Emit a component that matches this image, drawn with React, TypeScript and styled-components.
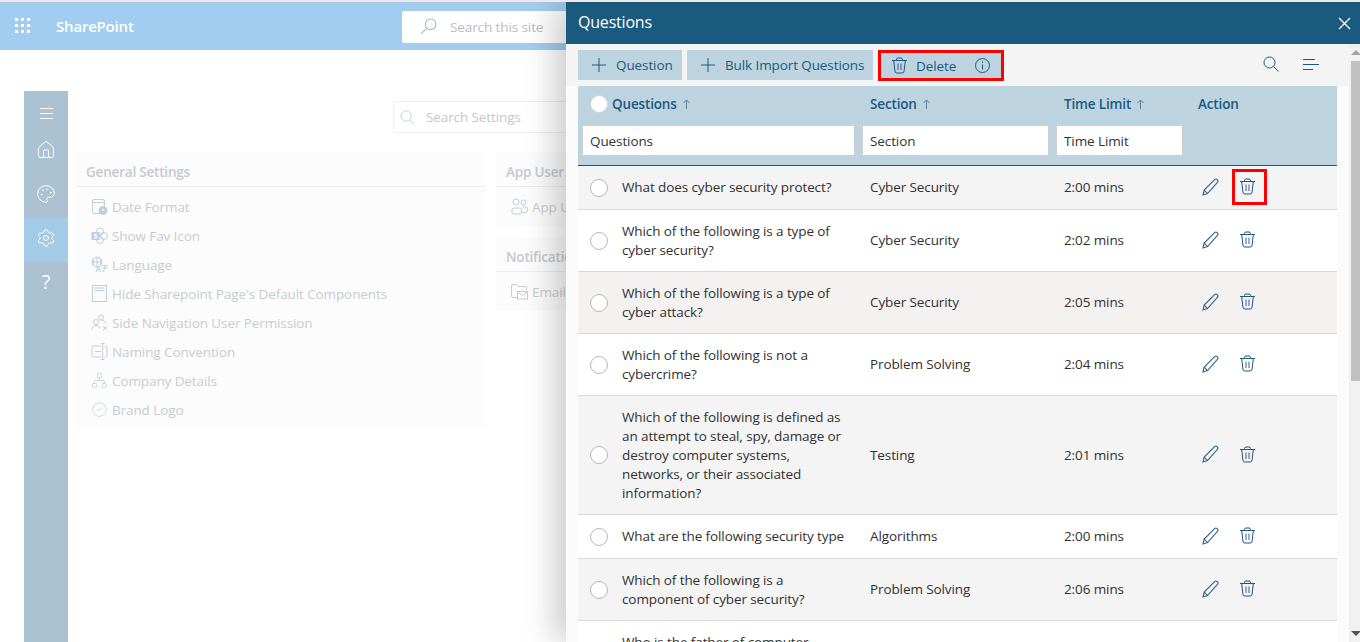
import React from 'react';
import styled, { createGlobalStyle } from 'styled-components';
import { Home, Palette, Settings, BadgeCheck, Network } from 'lucide-react';

const Global = createGlobalStyle`
  html, body { margin: 0; padding: 0; height: 100%; overflow: hidden; background: #fff; }
  body { font-family: "Open Sans", "Noto Sans", sans-serif; }
  * { box-sizing: border-box; }
`;

const Page = styled.div`
  width: 1360px; height: 642px; position: relative; overflow: hidden; background: #fff;
  display: flex; flex-direction: column; border-top: 2px solid #f6e6e8;
`;
const TopBar = styled.header`
  height: 48px; flex: none; background: #a3cdf0; display: flex; align-items: center; color: #fff;
`;
const Waffle = styled.div`
  width: 16px; height: 16px; margin-left: 15px; display: grid; grid-template-columns: repeat(3, 3px); grid-auto-rows: 3px; gap: 3px;
  i { display: block; background: #fff; }
`;
const Brand = styled.div`
  margin-left: 25px; font-size: 15px; font-weight: 600; letter-spacing: -0.2px; width: 346px;
`;
const SiteSearch = styled.div`
  width: 300px; height: 32px; background: #fff; border-radius: 2px; display: flex; align-items: center; padding-left: 18px; gap: 13px;
  margin-top: 1px; color: #b9bdc2; font-size: 13.5px; letter-spacing: -0.1px;
`;
const Body = styled.div`
  flex: 1; display: flex; padding: 41px 0 0 24px; min-height: 0;
`;
const Rail = styled.nav`
  width: 44px; flex: none; background: #abc2d2; display: flex; flex-direction: column; color: #fff;
`;
const RailItem = styled.div<{ $active?: boolean; $h?: number; $pb?: number; $pt?: number }>`
  height: ${p => p.$h ?? 44}px; padding-bottom: ${p => p.$pb ?? 0}px; padding-top: ${p => p.$pt ?? 0}px; display: flex; align-items: center; justify-content: center; background: ${p => (p.$active ? '#a3cbe6' : 'transparent')};
  font-size: 20px; font-weight: 400;
`;
const Main = styled.main`
  flex: 1; padding: 10px 0 0 8px; min-width: 0; display: flex; flex-direction: column;
`;
const SettingsSearch = styled.div`
  width: 200px; height: 32px; margin-left: 317px; border: 1px solid #eeeeee; border-radius: 2px; display: flex; align-items: center; gap: 11px; padding-left: 6px;
  color: #c3c7cb; font-size: 13.5px; letter-spacing: -0.1px;
`;
const Columns = styled.div`
  display: flex; gap: 10px; margin-top: 19px; align-items: flex-start;
`;
const LeftCard = styled.section`
  width: 410px; height: 276px; background: #fcfcfc;
`;
const RightStack = styled.div`
  display: flex; flex-direction: column; gap: 10px; width: 300px;
`;
const RightCard = styled.section<{ $h: number }>`
  height: ${p => p.$h}px; background: #fcfcfc;
`;
const CardTitle = styled.div`
  height: 35px; border-bottom: 1px solid #eeeeee; padding: 11px 0 0 10px; font-size: 13.5px; font-weight: 600; letter-spacing: -0.2px; color: #c3cbd2; line-height: 18px;
`;
const SettingRow = styled.div`
  height: 29px; display: flex; align-items: center; padding-left: 15px; gap: 4px; font-size: 13.5px; color: #c9cccf; letter-spacing: -0.1px;
  ${CardTitle} + & { margin-top: 5px; }
  svg { color: #bccfdd; flex: none; }
`;

const Panel = styled.aside`
  position: absolute; left: 566px; top: 0; width: 794px; height: 640px; background: #fff; display: flex; flex-direction: column;
  box-shadow: -12px 0 30px rgba(0, 0, 0, 0.2);
`;
const PanelHead = styled.div`
  height: 42px; flex: none; background: #1a5a7e; color: #fff; display: flex; align-items: center; justify-content: space-between; padding: 0 9px 0 12px;
  font-size: 16px; letter-spacing: -0.2px;
`;
const PanelTitle = styled.span`
  margin-top: -2px;
`;
const PanelBody = styled.div`
  flex: 1; display: flex; min-height: 0;
`;
const Content = styled.div`
  flex: 1; min-width: 0; overflow: hidden; padding: 0 12px;
  background: linear-gradient(#f4f4f4 0 42px, #fbfbfb 42px);
`;
const Scrollbar = styled.div`
  width: 11px; flex: none; background: #f1f1f1; display: flex; flex-direction: column; align-items: flex-end;
`;
const Arrow = styled.div<{ $up?: boolean }>`
  height: 17px; width: 9px; display: flex; align-items: center; justify-content: center;
  &::before { content: ''; border-left: 5px solid transparent; border-right: 5px solid transparent; ${p => (p.$up ? 'border-bottom: 5px solid #a3a3a3;' : 'border-top: 5px solid #505050;')} }
`;
const Thumb = styled.div`
  width: 9px; height: 320px; background: #c1c1c1;
`;
const ScrollGap = styled.div`
  flex: 1;
`;
const Toolbar = styled.div`
  height: 42px; display: flex; align-items: flex-start; gap: 5px; padding-top: 6px;
`;
const ToolButton = styled.button<{ $w: number; $outlined?: boolean }>`
  width: ${p => p.$w}px; height: ${p => (p.$outlined ? 31 : 30)}px; background: #bed3e0; border: ${p => (p.$outlined ? '3px solid #f00' : 'none')}; border-radius: 0;
  display: flex; align-items: center; gap: ${p => (p.$outlined ? 9 : 10)}px; padding: 0 0 0 ${p => (p.$outlined ? '11px' : '14px')}; color: #1a5a7e; font: inherit; font-size: 13.5px; letter-spacing: -0.1px; white-space: nowrap;
  svg { flex: none; }
`;
const InfoWrap = styled.span`
  margin-left: auto; margin-right: 11px; display: flex;
`;
const ToolRight = styled.div`
  margin-left: auto; display: flex; align-items: center; gap: 24px; padding: 6px 18px 0 0; color: #1a5a7e;
`;
const grid = `display: grid; grid-template-columns: 284px 194px 134px 1fr;`;
const HeadGrid = styled.div`
  ${grid}
  height: 80px; background: #bed3e0; border-bottom: 1px solid #1a5a7e;
`;
const HeadCell = styled.div`
  display: flex; flex-direction: column; padding-top: 7px;
`;
const HeadLabel = styled.div<{ $left: number }>`
  height: 22px; display: flex; align-items: center; gap: 4px; padding-left: ${p => p.$left}px; font-size: 13.5px; font-weight: 600; color: #1a5a7e; letter-spacing: -0.15px;
  svg { margin-left: 2px; }
`;
const FilterInput = styled.div<{ $ml: number; $w: number }>`
  margin: 10px 0 0 ${p => p.$ml}px; width: ${p => p.$w}px; height: 31px; background: #fff; border: 1px solid #cfcfcf; padding-left: 7px; display: flex; align-items: center;
  font-size: 13.5px; color: #333; letter-spacing: -0.1px;
`;
const Radio = styled.span<{ $head?: boolean }>`
  width: 18px; height: 18px; border-radius: 50%; background: #fff; border: 1px solid ${p => (p.$head ? '#d0d6da' : '#b8b8b8')}; flex: none; display: block;
`;
const RowGrid = styled.div<{ $h: number; $bg: string }>`
  ${grid}
  height: ${p => p.$h}px; background: ${p => p.$bg}; border-bottom: 1px solid #dcd8d9; align-items: center; font-size: 13.5px; color: #323130; line-height: 19px; letter-spacing: -0.1px;
`;
const QCell = styled.div`
  display: flex; align-items: center; gap: 14px; padding: 0 8px 0 12px; white-space: nowrap;
`;
const Cell = styled.div`
  padding-left: 8px;
`;
const Actions = styled.div`
  display: flex; align-items: center; padding-left: 12px; color: #1a5a7e; margin-top: -2px;
`;
const TrashBox = styled.span<{ $on?: boolean }>`
  margin-left: 12px; width: 35px; height: 36px; display: flex; align-items: center; padding-left: 5px; border: 3px solid ${p => (p.$on ? '#f00' : 'transparent')};
`;

const SortUp = () => (
  <svg width="7" height="10" viewBox="0 0 7 10" fill="none" stroke="#5f8299"><path d="M3.500 10V1M.5 4l3-3 3 3" /></svg>
);
const Trash = () => (
  <svg width="15" height="17" viewBox="0 0 15 17" fill="none" stroke="currentColor" strokeWidth="1">
    <path d="M0 3.500h15M4.500 3.500V2.500a1.500 1.500 0 0 1 1.500-1.500h3a1.500 1.500 0 0 1 1.500 1.500v1M1.700 3.500 2.900 14a2 2 0 0 0 2 2h5.200a2 2 0 0 0 2-2l1.200-10.500" />
    <path d="M6 6.500v6.500M9 6.500v6.500" stroke="#5a4f92" />
  </svg>
);
const Pencil = () => (
  <svg width="18" height="18" viewBox="0 0 18 18" fill="none" stroke="#2f6488" strokeWidth="1.1" style={{ flex: 'none' }}>
    <path d="M1 17 2.200 12 12.600 1.600a1.800 1.800 0 0 1 2.500 0l.3.3a1.800 1.800 0 0 1 0 2.500L5.500 15.600ZM2.200 12l3.300 3.600" />
  </svg>
);
const Plus = () => (
  <svg width="14" height="14" viewBox="0 0 14 14" stroke="#1a5a7e" strokeWidth="1"><path d="M7 0v14M0 7h14" /></svg>
);
const Info = () => (
  <svg width="15" height="15" viewBox="0 0 15 15" fill="none" stroke="#1a5a7e"><circle cx="7.500" cy="7.500" r="7" /><path d="M7.500 6.500v5M7.500 3.500v1.400" /></svg>
);
const Glass = ({ c, s }: { c: string; s: number }) => (
  <svg width={s} height={s} viewBox="0 0 16 16" fill="none" stroke={c} strokeWidth="1"><circle cx="6.500" cy="6.500" r="5.500" /><path d="m10.500 10.500 5 5" /></svg>
);
const SiteGlass = () => (
  <svg width="17" height="17" viewBox="0 0 16 16" fill="none" stroke="#9fb8cc" strokeWidth="1"><circle cx="10" cy="6" r="5" /><path d="M6.400 9.600 1 15" /></svg>
);
const Lines = () => (
  <svg width="16" height="13" viewBox="0 0 16 13" stroke="#1a5a7e"><path d="M0 1.500h12M0 6.500h16M0 11.500h10" /></svg>
);
const Close = () => (
  <svg width="13" height="13" viewBox="0 0 13 13" stroke="#fff" strokeWidth="1.300"><path d="m1 1 11 11M12 1 1 12" /></svg>
);
const Burger = () => (
  <svg width="15" height="13" viewBox="0 0 15 13" stroke="#fff"><path d="M1 1.500h13M1 6.500h13M1 11.500h13" /></svg>
);

const ic = { width: 17, height: 17, viewBox: '0 0 17 17', fill: 'none', stroke: 'currentColor', strokeWidth: 1 };
const DateIcon = () => (
  <svg {...ic}><path d="M9 15.500H3a1.500 1.500 0 0 1-1.500-1.500V3A1.500 1.500 0 0 1 3 1.500h9A1.500 1.500 0 0 1 13.500 3v6M1.500 4.500h12" /><circle cx="12" cy="12.500" r="4" fill="currentColor" /><path d="M12 10.500v2h1.500" stroke="#fff" /></svg>
);
const FavIcon = () => (
  <svg {...ic}><circle cx="9" cy="4.500" r="3.500" /><circle cx="13" cy="9" r="3.500" /><circle cx="9" cy="13" r="3.500" /><rect x="0.500" y="5" width="8" height="8" fill="currentColor" stroke="none" /><path d="M6 7H3.500v2H6v2H3" stroke="#fff" /></svg>
);
const LangIcon = () => (
  <svg {...ic}><circle cx="6" cy="6" r="5" /><path d="M1 6h10M6 1v10M3 2c-1 2.500-1 5.500 0 8M9 2c1 2.500 1 5.500 0 8" /><path d="m5 16 2.200-6 2.200 6M5.800 14h2.800M11 9.500h5.500M13.700 9.500v1.500c0 2-.5 3.500-2 5M11.500 12h5" /></svg>
);
const WindowIcon = () => (
  <svg {...ic}><rect x="1.500" y="0.500" width="14" height="16" /><path d="M3.500 5.500h10M3.500 3h10" /></svg>
);
const PermIcon = () => (
  <svg {...ic}><circle cx="10" cy="3.500" r="2.500" /><circle cx="5" cy="8" r="2.500" /><path d="M1 15.500c0-2.500 1.500-4 4-4s3.500 1 4 3M10 6c2 0 4 1 4.500 3.500M12 12l4 4M16 12l-4 4" /></svg>
);
const NameIcon = () => (
  <svg {...ic}><path d="M10 3H2.500A1.500 1.500 0 0 0 1 4.500v8A1.500 1.500 0 0 0 2.500 14H10M13.500 3h1A1.500 1.500 0 0 1 16 4.500v8a1.500 1.500 0 0 1-1.500 1.500h-1M4 8.500h6M10 .5h3.500M10 16.500h3.500M11.700 .5v16" /></svg>
);
const UsersIcon = () => (
  <svg {...ic}><circle cx="5" cy="4" r="3" /><circle cx="12.500" cy="4.500" r="2.500" /><path d="M1 14V12a2 2 0 0 1 2-2h5.500a2 2 0 0 1 2 2v2a2 2 0 0 1-2 2H3a2 2 0 0 1-2-2ZM12 9h2.500a2 2 0 0 1 2 2v1.500a2 2 0 0 1-2 2H11" /></svg>
);
const MailFolderIcon = () => (
  <svg {...ic}><path d="M6 14.500H2A1.500 1.500 0 0 1 .5 13V3A1.500 1.500 0 0 1 2 1.500h3l2 2h7A1.500 1.500 0 0 1 15.500 5v2" /><rect x="6.500" y="8.500" width="10" height="7.500" /><path d="m6.500 9 5 3.500 5-3.500" /></svg>
);

const settings: [React.ReactNode, string][] = [
  [<DateIcon />, 'Date Format'],
  [<FavIcon />, 'Show Fav Icon'],
  [<LangIcon />, 'Language'],
  [<WindowIcon />, "Hide Sharepoint Page's Default Components"],
  [<PermIcon />, 'Side Navigation User Permission'],
  [<NameIcon />, 'Naming Convention'],
  [<Network size={17} strokeWidth={1} />, 'Company Details'],
  [<BadgeCheck size={17} strokeWidth={1} />, 'Brand Logo'],
];

const rows: { q: React.ReactNode; s: string; t: string; h: number; bg: string; on?: boolean }[] = [
  { q: 'What does cyber security protect?', s: 'Cyber Security', t: '2:00 mins', h: 44, bg: '#f4f4f4', on: true },
  { q: <>Which of the following is a type of<br />cyber security?</>, s: 'Cyber Security', t: '2:02 mins', h: 62, bg: '#fff' },
  { q: <>Which of the following is a type of<br />cyber attack?</>, s: 'Cyber Security', t: '2:05 mins', h: 62, bg: '#f3f2f1' },
  { q: <>Which of the following is not a<br />cybercrime?</>, s: 'Problem Solving', t: '2:04 mins', h: 62, bg: '#fff' },
  { q: <>Which of the following is defined as<br />an attempt to steal, spy, damage or<br />destroy computer systems,<br />networks, or their associated<br />information?</>, s: 'Testing', t: '2:01 mins', h: 119, bg: '#f4f4f4' },
  { q: 'What are the following security type', s: 'Algorithms', t: '2:00 mins', h: 44, bg: '#fff' },
  { q: <>Which of the following is a<br />component of cyber security?</>, s: 'Problem Solving', t: '2:06 mins', h: 62, bg: '#f4f4f4' },
  { q: <>Who is the father of computer<br />security?</>, s: 'Testing', t: '2:00 mins', h: 62, bg: '#fff' },
];

export default function App() {
  return (
    <Page>
      <Global />
      <TopBar>
        <Waffle>{Array.from({ length: 9 }, (_, i) => <i key={i} />)}</Waffle>
        <Brand>SharePoint</Brand>
        <SiteSearch><SiteGlass />Search this site</SiteSearch>
      </TopBar>
      <Body>
        <Rail>
          <RailItem $h={37} $pt={8}><Burger /></RailItem>
          <RailItem><Home size={20} strokeWidth={1.2} /></RailItem>
          <RailItem $h={46} $pb={2}><Palette size={20} strokeWidth={1.2} /></RailItem>
          <RailItem $active $pb={4}><Settings size={20} strokeWidth={1.2} /></RailItem>
          <RailItem $pb={6}>?</RailItem>
        </Rail>
        <Main>
          <SettingsSearch><Glass c="#bfd0dd" s={15} />Search Settings</SettingsSearch>
          <Columns>
            <LeftCard>
              <CardTitle>General Settings</CardTitle>
              {settings.map(([icon, l]) => <SettingRow key={l}>{icon}{l}</SettingRow>)}
            </LeftCard>
            <RightStack>
              <RightCard $h={75}>
                <CardTitle>App User</CardTitle>
                <SettingRow><UsersIcon />App U</SettingRow>
              </RightCard>
              <RightCard $h={74}>
                <CardTitle>Notifications</CardTitle>
                <SettingRow><MailFolderIcon />Email</SettingRow>
              </RightCard>
            </RightStack>
          </Columns>
        </Main>
      </Body>
      <Panel>
        <PanelHead><PanelTitle>Questions</PanelTitle><Close /></PanelHead>
        <PanelBody>
          <Content>
            <Toolbar>
              <ToolButton $w={104}><Plus />Question</ToolButton>
              <ToolButton $w={186}><Plus />Bulk Import Questions</ToolButton>
              <ToolButton $w={126} $outlined><Trash />Delete<InfoWrap><Info /></InfoWrap></ToolButton>
              <ToolRight><Glass c="#1a5a7e" s={16} /><Lines /></ToolRight>
            </Toolbar>
            <HeadGrid>
              <HeadCell>
                <HeadLabel $left={12}><Radio $head />Questions <SortUp /></HeadLabel>
                <FilterInput $ml={4} $w={273}>Questions</FilterInput>
              </HeadCell>
              <HeadCell>
                <HeadLabel $left={8}>Section <SortUp /></HeadLabel>
                <FilterInput $ml={0} $w={187}>Section</FilterInput>
              </HeadCell>
              <HeadCell>
                <HeadLabel $left={8}>Time Limit <SortUp /></HeadLabel>
                <FilterInput $ml={0} $w={127}>Time Limit</FilterInput>
              </HeadCell>
              <HeadCell>
                <HeadLabel $left={8}>Action</HeadLabel>
              </HeadCell>
            </HeadGrid>
            {rows.map((r, i) => (
              <RowGrid key={i} $h={r.h} $bg={r.bg}>
                <QCell><Radio /><div>{r.q}</div></QCell>
                <Cell>{r.s}</Cell>
                <Cell>{r.t}</Cell>
                <Actions><Pencil /><TrashBox $on={r.on}><Trash /></TrashBox></Actions>
              </RowGrid>
            ))}
          </Content>
          <Scrollbar>
            <Arrow $up />
            <Thumb />
            <ScrollGap />
            <Arrow />
          </Scrollbar>
        </PanelBody>
      </Panel>
    </Page>
  );
}
